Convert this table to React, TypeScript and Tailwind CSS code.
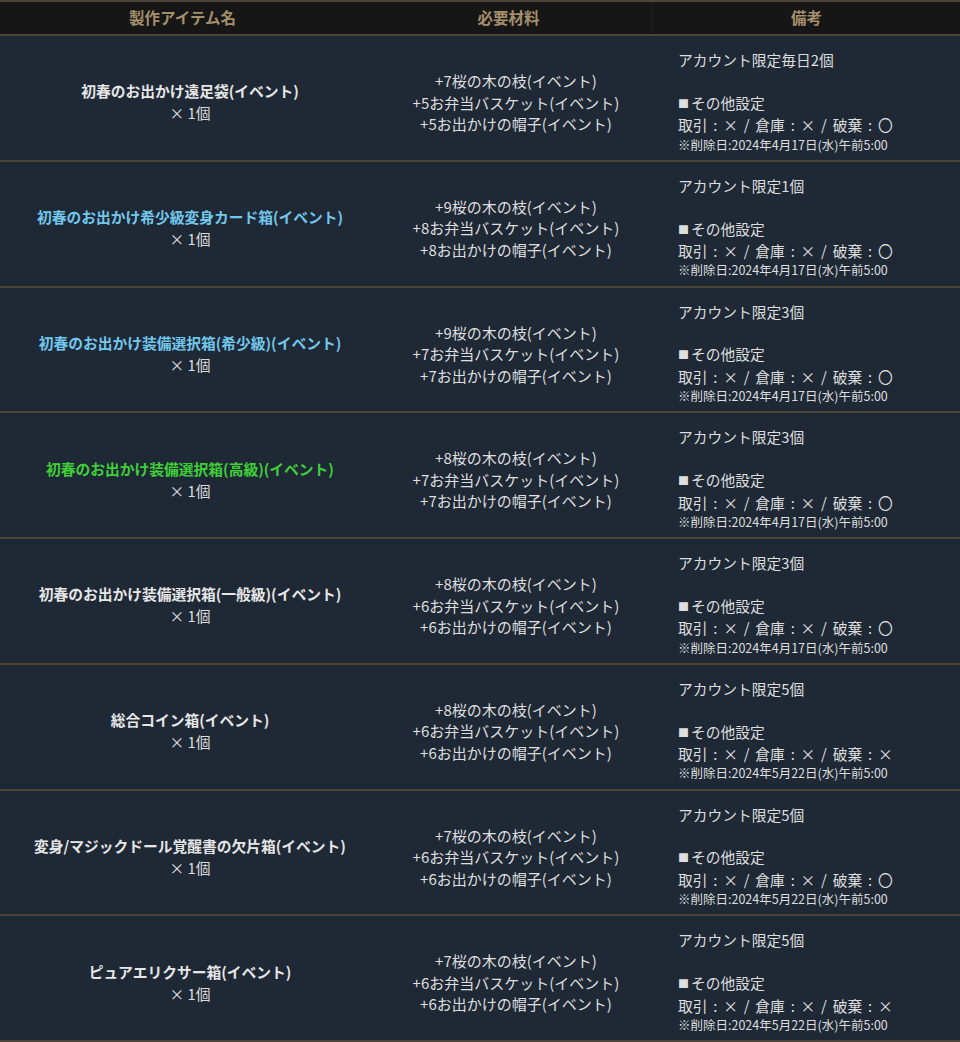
import React from 'react';

type Row = {
    name: string;
    tone: 'white' | 'blue' | 'green';
    mats: [number, number, number];
    limit: string;
    discard: string;
    deleteDate: string;
};

const rows: Row[] = [
    { name: '初春のお出かけ遠足袋(イベント)', tone: 'white', mats: [7, 5, 5], limit: 'アカウント限定毎日2個', discard: '〇', deleteDate: '2024年4月17日(水)午前5:00' },
    { name: '初春のお出かけ希少級変身カード箱(イベント)', tone: 'blue', mats: [9, 8, 8], limit: 'アカウント限定1個', discard: '〇', deleteDate: '2024年4月17日(水)午前5:00' },
    { name: '初春のお出かけ装備選択箱(希少級)(イベント)', tone: 'blue', mats: [9, 7, 7], limit: 'アカウント限定3個', discard: '〇', deleteDate: '2024年4月17日(水)午前5:00' },
    { name: '初春のお出かけ装備選択箱(高級)(イベント)', tone: 'green', mats: [8, 7, 7], limit: 'アカウント限定3個', discard: '〇', deleteDate: '2024年4月17日(水)午前5:00' },
    { name: '初春のお出かけ装備選択箱(一般級)(イベント)', tone: 'white', mats: [8, 6, 6], limit: 'アカウント限定3個', discard: '〇', deleteDate: '2024年4月17日(水)午前5:00' },
    { name: '総合コイン箱(イベント)', tone: 'white', mats: [8, 6, 6], limit: 'アカウント限定5個', discard: '×', deleteDate: '2024年5月22日(水)午前5:00' },
    { name: '変身/マジックドール覚醒書の欠片箱(イベント)', tone: 'white', mats: [7, 6, 6], limit: 'アカウント限定5個', discard: '〇', deleteDate: '2024年5月22日(水)午前5:00' },
    { name: 'ピュアエリクサー箱(イベント)', tone: 'white', mats: [7, 6, 6], limit: 'アカウント限定5個', discard: '×', deleteDate: '2024年5月22日(水)午前5:00' },
];

const toneClass = {
    white: 'text-[#e6e6e6]',
    blue: 'text-[#72c7ec]',
    green: 'text-[#3fcf36]',
};

const App = () => {
    return (
        <div className="w-[960px] bg-[#1f2936] text-[#dedede] font-['Meiryo','Noto_Sans_CJK_JP',sans-serif]">
            {/* Header */}
            <div className="grid grid-cols-[365px_287px_1fr] h-[36px] bg-[#171616] border-t-2 border-b-2 border-[#4d4336] text-[#a48f6c] text-[15.5px] font-bold">
                <div className="flex items-center justify-center">製作アイテム名</div>
                <div className="flex items-center justify-center">必要材料</div>
                <div className="flex items-center justify-center border-l border-[#232120]">備考</div>
            </div>

            {/* Rows */}
            {rows.map((row) => (
                <div
                    key={row.name}
                    className="grid grid-cols-[380px_272px_1fr] h-[125.75px] border-b-2 border-[#4d4336]"
                >
                    <div className="flex flex-col items-center justify-center pt-[9px] leading-[22px]">
                        <span className={`text-[14.75px] font-bold ${toneClass[row.tone]}`}>{row.name}</span>
                        <span className="text-[14.75px] text-[#dcdcdc]">× 1個</span>
                    </div>
                    <div className="flex flex-col items-center justify-center pt-[9px] text-[15px] leading-[21.5px]">
                        <span>+{row.mats[0]}桜の木の枝(イベント)</span>
                        <span>+{row.mats[1]}お弁当バスケット(イベント)</span>
                        <span>+{row.mats[2]}お出かけの帽子(イベント)</span>
                    </div>
                    <div className="flex flex-col justify-center pl-[26px] pt-[6px] text-[14.75px] leading-[21.4px]">
                        <span>{row.limit}</span>
                        <span>&nbsp;</span>
                        <span><span className="text-[11px] align-[1px] mr-[2px]">■</span>その他設定</span>
                        <span className="[word-spacing:2.5px]">取引 : × / 倉庫 : × / 破棄 : {row.discard}</span>
                        <span className="text-[12.5px] leading-[17px]">※削除日:{row.deleteDate}</span>
                    </div>
                </div>
            ))}
        </div>
    );
};

export default App;
